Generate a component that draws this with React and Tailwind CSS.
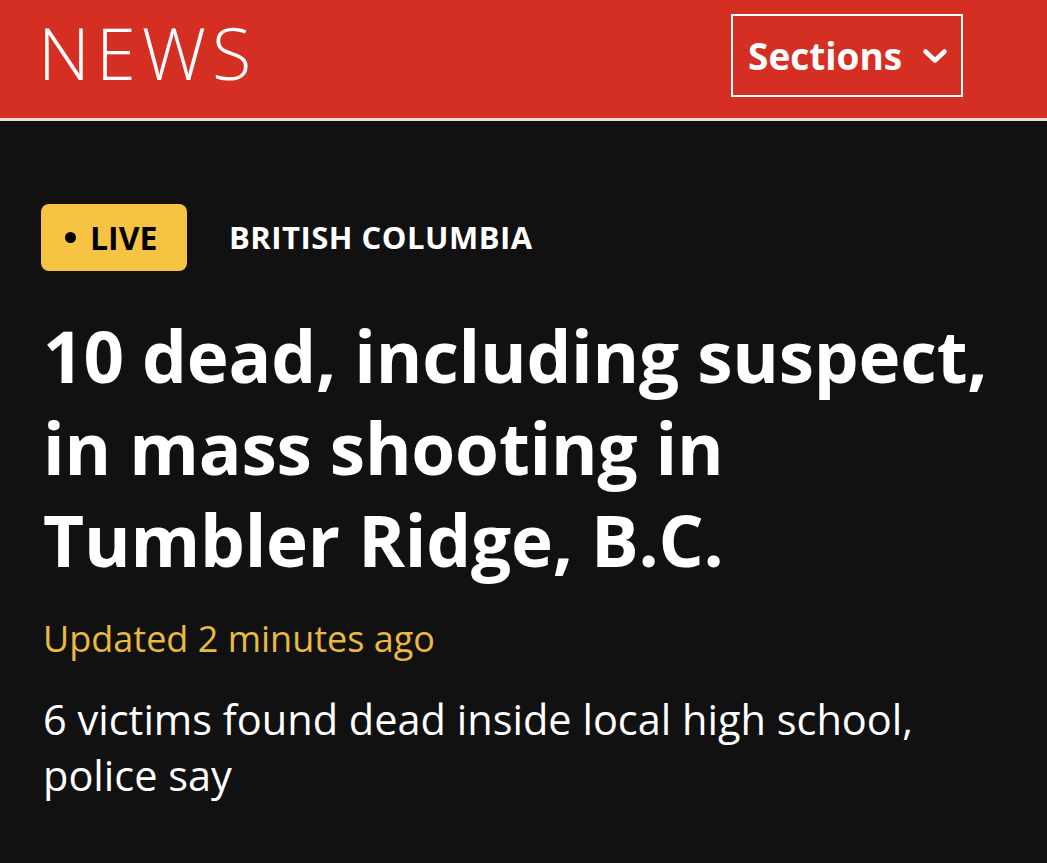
export default function App() {
    return (
        <div className="w-[1047px] h-[863px] bg-[#111111] overflow-hidden" style={{ fontFamily: '"Open Sans", "Noto Sans", sans-serif' }}>
            <header className="h-[121px] bg-[#d52e23] flex items-center justify-between pl-[38px] pr-[84px] pb-[7px] border-b-[3px] border-[#f4dcd8]">
                <span className="mb-[7px] text-[72px] font-light text-white leading-none tracking-[6px]">NEWS</span>
                <button className="w-[232px] h-[83px] border-2 border-white flex items-center pl-[15px] gap-[20px] text-white text-[37px] font-bold">
                    Sections
                    <svg width="26" height="16" viewBox="0 0 26 16" fill="none" stroke="white" strokeWidth="4.5" strokeLinecap="round" strokeLinejoin="round">
                        <path d="M3.5 3.5l9.5 9 9.5-9" />
                    </svg>
                </button>
            </header>
            <main className="px-[41px] pt-[83px]">
                <div className="flex items-center gap-[42px]">
                    <span className="h-[67px] w-[146px] pl-[24px] rounded-[8px] bg-[#f6c342] flex items-center gap-[14px] text-black text-[32px] font-bold">
                        <span className="w-[11px] h-[11px] rounded-full bg-black"></span>
                        LIVE
                    </span>
                    <span className="text-white text-[31px] font-bold tracking-[0.5px]">BRITISH COLUMBIA</span>
                </div>
                <h1 className="mt-[39px] pl-[2px] text-white text-[71px] font-bold leading-[92px] tracking-[-0.2px] whitespace-nowrap">
                    10 dead, including suspect,<br />
                    in mass shooting in<br />
                    Tumbler Ridge, B.C.
                </h1>
                <p className="mt-[33px] pl-[2px] text-[#eab93f] text-[36px] leading-[40px]">Updated 2 minutes ago</p>
                <p className="mt-[32px] pl-[2px] text-white text-[41.5px] leading-[56px] whitespace-nowrap">
                    6 victims found dead inside local high school,<br />
                    police say
                </p>
            </main>
        </div>
    );
}
